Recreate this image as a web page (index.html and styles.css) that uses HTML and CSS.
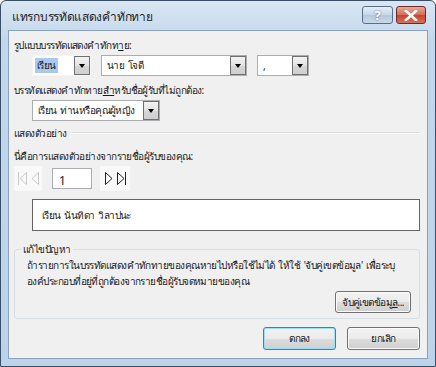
FILE: index.html
```html
<!DOCTYPE html>
<html lang="th">
<head>
  <meta charset="UTF-8" />
  <title>แทรกบรรทัดแสดงคำทักทาย</title>
  <link rel="stylesheet" href="styles.css">
</head>
<body>
  <div class="window">
    <div class="titlebar">
      <span class="title">แทรกบรรทัดแสดงคำทักทาย</span>
      <div class="caption-btns">
        <div class="cbtn help">?</div>
        <div class="cbtn close">
          <svg width="14" height="11" viewBox="0 0 14 11"><path d="M2 1 L12 10 M12 1 L2 10" stroke="#fff" stroke-width="2.6" stroke-linecap="square"/></svg>
        </div>
      </div>
    </div>

    <div class="client">
      <div class="label">รูปแบบบรรทัดแสดงคำทักท<u>า</u>ย:</div>
      <div class="combo-row">
        <div class="combo plain" style="width:59px"><span class="sel">เรียน</span><span class="arrow"></span></div>
        <div class="combo" style="width:146px"><span class="val">นาย โจดี</span><span class="arrow"></span></div>
        <div class="combo" style="width:52px"><span class="val">,</span><span class="arrow"></span></div>
      </div>

      <div class="label">บรรทัดแสดงคำทักทาย<u>ส</u>ำหรับชื่อผู้รับที่ไม่ถูกต้อง:</div>
      <div class="combo-row">
        <div class="combo" style="width:128px"><span class="val">เรียน ท่านหรือคุณผู้หญิง</span><span class="arrow"></span></div>
      </div>

      <div class="sep-head">
        <span>แสดงตัวอย่าง</span>
        <div class="line"></div>
      </div>

      <div class="label preview-lbl">นี่คือการแสดงตัวอย่างจากรายชื่อผู้รับของคุณ:</div>
      <div class="nav-row">
        <div class="nav-btns disabled">
          <svg width="28" height="25" viewBox="0 0 28 25">
            <path d="M4.5 6 V19 M12.5 6.5 L6 12.5 L12.5 18.5 Z" fill="none" stroke="#c9c9c9"/>
            <path d="M24.5 6.5 L18 12.5 L24.5 18.5 Z" fill="none" stroke="#c9c9c9"/>
          </svg>
        </div>
        <div class="page-box">1</div>
        <div class="nav-btns">
          <svg width="30" height="25" viewBox="0 0 30 25">
            <path d="M5.5 6.5 L12 12.5 L5.5 18.5 Z" fill="none" stroke="#222"/>
            <path d="M17.5 6.5 L24 12.5 L17.5 18.5 Z M25.5 6 V19" fill="none" stroke="#222"/>
          </svg>
        </div>
      </div>
      <div class="preview">เรียน นันทิดา วิลาปนะ</div>

      <fieldset class="group">
        <legend>แก้ไขปัญหา</legend>
        <p>ถ้ารายการในบรรทัดแสดงคำทักทายของคุณหายไปหรือใช้ไม่ได้ ให้ใช้ 'จับคู่เขตข้อมูล' เพื่อระบุ
องค์ประกอบที่อยู่ที่ถูกต้องจากรายชื่อผู้รับจดหมายของคุณ</p>
        <div class="group-foot">
          <button class="btn">จับคู่เขตข้อมู<u>ล</u>...</button>
        </div>
      </fieldset>

      <div class="dialog-foot">
        <button class="btn big default">ตกลง</button>
        <button class="btn big">ยกเลิก</button>
      </div>
    </div>
  </div>
</body>
</html>
```

FILE: styles.css
```css
* {
  margin: 0;
  padding: 0;
  box-sizing: border-box;
}

body {
  width: 436px;
  height: 367px;
  background: #fff;
  font-family: Tahoma, "Noto Sans", "DejaVu Sans", sans-serif;
  font-size: 10px;
  letter-spacing: -0.55px;
  word-spacing: 1.5px;
  color: #1b1b1b;
}

.window {
  width: 436px;
  height: 367px;
  border: 1px solid #3a4f66;
  border-radius: 6px 6px 0 0;
  background: linear-gradient(#d9e6f3, #c3d7ec 40px, #bcd3eb);
  display: flex;
  flex-direction: column;
  padding: 0 7px 7px 7px;
}

.titlebar {
  height: 29px;
  display: flex;
  align-items: center;
  justify-content: space-between;
}

.title {
  font-size: 12px;
  letter-spacing: -0.3px;
  color: #1f1f1f;
  padding-left: 4px;
  padding-top: 2px;
}

.caption-btns {
  display: flex;
  gap: 3px;
  margin-top: -1px;
  margin-right: 2px;
}

.cbtn {
  height: 18px;
  border: 1px solid #5a6f86;
  border-radius: 3px;
  display: flex;
  align-items: center;
  justify-content: center;
}

.help {
  width: 31px;
  background: linear-gradient(#e6eef7, #c6d6e8 50%, #b3c7dd 51%, #c9d9ea);
  color: #fff;
  font-weight: bold;
  font-size: 13px;
  letter-spacing: 0;
  text-shadow: 0 0 2px #456;
}

.close {
  width: 30px;
  border-color: #6b2a22;
  background: linear-gradient(#e9a99a, #d46a56 50%, #c5432f 51%, #d6715c);
}

.client {
  flex: 1;
  background: #f0f0f0;
  border: 1px solid #8aa2bd;
  padding: 0 7px 0 5px;
  display: flex;
  flex-direction: column;
}

.label {
  margin-top: 7px;
  height: 14px;
  line-height: 14px;
}

.combo-row {
  display: flex;
  gap: 10px;
  margin: 3px 0 0 18px;
}

.combo {
  height: 21px;
  background: #fff;
  border: 1px solid #abadb3;
  display: flex;
  align-items: center;
  justify-content: space-between;
  padding: 1px;
}

.combo.plain {
  border-color: #f5f5f5;
}

.combo .val {
  padding-left: 4px;
  white-space: nowrap;
}

.sel {
  background: #a9c9ee;
  color: #1b1b1b;
  padding: 0 2px;
  margin-left: 1px;
  line-height: 15px;
}

.arrow {
  width: 16px;
  height: 19px;
  margin: -1px -1px -1px 0;
  border: 1px solid #707070;
  background: linear-gradient(#f2f2f2, #e3e3e3 50%, #d6d6d6 51%, #cfcfcf);
  position: relative;
  flex-shrink: 0;
}

.arrow::after {
  content: "";
  position: absolute;
  left: 4px;
  top: 7px;
  border-left: 3.5px solid transparent;
  border-right: 3.5px solid transparent;
  border-top: 4px solid #000;
}

.sep-head {
  display: flex;
  align-items: center;
  gap: 5px;
  margin-top: 5px;
  height: 14px;
}

.sep-head .line {
  flex: 1;
  border-top: 1px solid #dcdcdc;
  border-bottom: 1px solid #fff;
}

.preview-lbl {
  margin-top: 9px;
}

.nav-row {
  display: flex;
  align-items: center;
  margin-top: 2px;
  height: 26px;
}

.nav-btns {
  background: #f9f9f9;
  height: 25px;
  display: flex;
}

.page-box {
  width: 40px;
  height: 21px;
  margin: 0 8px 0 10px;
  background: #fff;
  border: 1px solid #abadb3;
  padding: 3px 0 0 6px;
  font-size: 12px;
  letter-spacing: 0;
}

.preview {
  margin: 8px 0 0 18px;
  height: 32px;
  background: #fff;
  border: 1px solid #646464;
  padding: 8px 0 0 9px;
}

.group {
  margin-top: 11px;
  border: 1px solid #d5dfe5;
  border-radius: 3px;
  padding: 0 8px 0 12px;
  height: 77px;
}

.group legend {
  padding: 0 2px;
  margin-left: -6px;
  line-height: 14px;
}

.group p {
  white-space: pre;
  line-height: 16px;
  margin-top: 1px;
}

.group-foot {
  display: flex;
  justify-content: flex-end;
  margin-top: 2px;
}

.btn {
  font-family: inherit;
  font-size: 10px;
  letter-spacing: -0.55px;
  color: #1b1b1b;
  height: 22px;
  padding: 0 6px;
  border: 1px solid #707070;
  border-radius: 3px;
  background: linear-gradient(#f2f2f2, #ebebeb 50%, #dddddd 51%, #cfcfcf);
  box-shadow: inset 0 0 0 1px #fcfcfc;
}

.dialog-foot {
  display: flex;
  justify-content: flex-end;
  gap: 11px;
  margin-top: 8px;
}

.btn.big {
  width: 73px;
  height: 23px;
}

.btn.default {
  border-color: #3c7fb1;
  box-shadow: inset 0 0 0 1px #9cdff8;
}
```
